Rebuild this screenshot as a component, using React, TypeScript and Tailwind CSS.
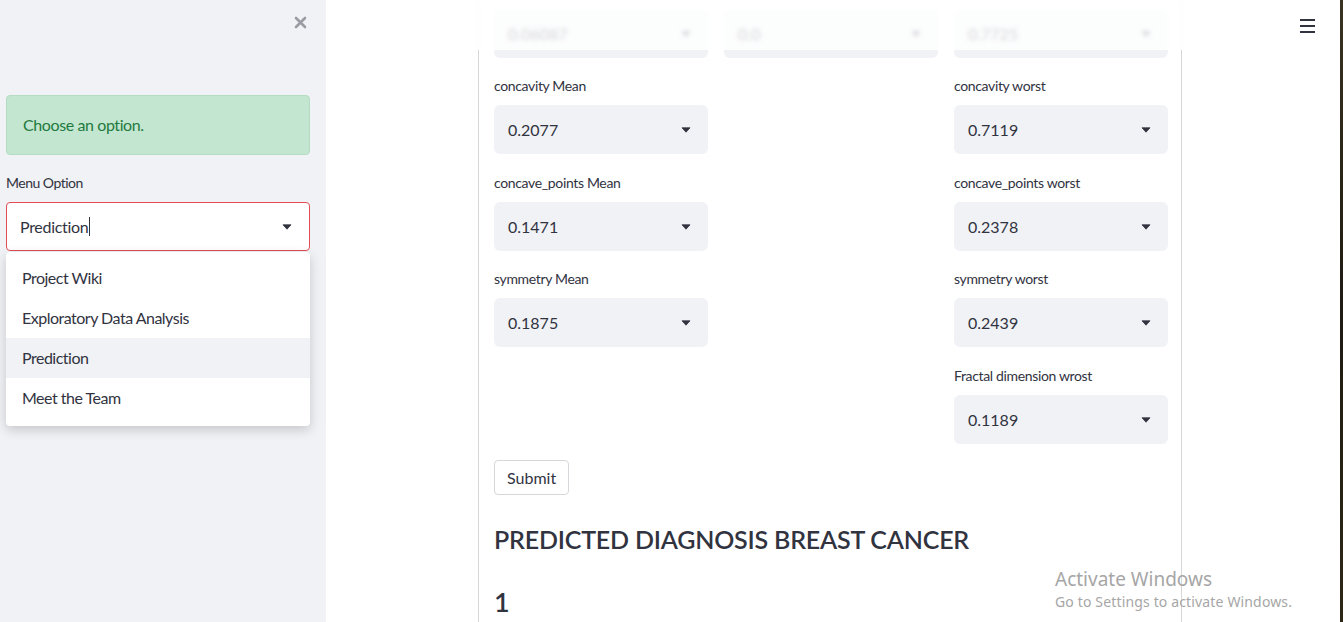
import React from "react";

const FONT = { fontFamily: "Lato, 'Noto Sans', sans-serif" };

function Caret() {
  return (
    <svg width="10" height="6" viewBox="0 0 10 6" className="shrink-0">
      <path d="M1 0.8 L9 0.8 L5 5.2 Z" fill="#31333f" stroke="#31333f" strokeWidth="0.8" strokeLinejoin="round" />
    </svg>
  );
}

function SelectBox({ value, tall = true }: { value: string; tall?: boolean }) {
  return (
    <div
      className={`${tall ? "h-[49px]" : "h-[48px]"} w-full rounded-[6px] bg-[#f0f2f6] flex items-center justify-between pl-[14px] pr-[17px] text-[16px] text-[#31333f]`}
    >
      <span>{value}</span>
      <Caret />
    </div>
  );
}

function Field({ label, value }: { label: string; value: string }) {
  return (
    <div className="flex flex-col">
      <div className="h-[31px] text-[14px] leading-[24px] tracking-[-0.35px] text-[#31333f]">{label}</div>
      <SelectBox value={value} />
    </div>
  );
}

export default function App() {
  return (
    <div className="flex h-[622px] w-[1343px] overflow-hidden bg-white" style={FONT}>
      {/* Sidebar */}
      <aside className="relative w-[326px] shrink-0 bg-[#f0f2f6] pl-[6px] pr-[16px] pt-[95px]">
        <button className="absolute right-[19px] top-[15px] flex h-[14px] w-[14px] items-center justify-center">
          <svg width="13" height="13" viewBox="0 0 13 13">
            <path d="M2 2 L11 11 M11 2 L2 11" stroke="#9b9ca3" strokeWidth="2.6" strokeLinecap="round" />
          </svg>
        </button>
        <div className="flex h-[60px] items-center rounded-[4px] border border-[#b4dcc2] bg-[#c3e6d0] px-[16px] text-[16px] tracking-[-0.4px] text-[#1f7a3e]">
          Choose an option.
        </div>
        <div className="mt-[16px] h-[31px] text-[14px] leading-[24px] tracking-[-0.5px] text-[#31333f]">Menu Option</div>
        <div className="relative">
          <div className="flex h-[49px] items-center justify-between rounded-[4px] border border-[#e34c56] bg-white pl-[13px] pr-[17px] text-[16px] text-[#31333f]">
            <span className="flex items-center tracking-[-0.3px]">
              Prediction
              <span className="ml-[1px] inline-block h-[19px] w-[1px] bg-[#31333f]" />
            </span>
            <Caret />
          </div>
          <div className="absolute left-0 right-0 top-[50px] z-20 rounded-[4px] bg-white pb-[8px] pt-[6px] shadow-[0_4px_12px_rgba(0,0,0,0.18)]">
            {["Project Wiki", "Exploratory Data Analysis", "Prediction", "Meet the Team"].map((t) => (
              <div
                key={t}
                className={`flex h-[40px] items-center px-[16px] text-[16px] tracking-[-0.5px] text-[#31333f] ${t === "Prediction" ? "bg-[#f0f2f6]" : ""}`}
              >
                {t}
              </div>
            ))}
          </div>
        </div>
      </aside>

      {/* Main */}
      <main className="relative flex-1 overflow-hidden bg-white">
        <header className="absolute left-0 right-0 top-0 z-10 h-[50px] bg-white/80 backdrop-blur-[2px]">
          <button className="absolute right-[25px] top-[19px] flex flex-col gap-[4px]">
            <span className="block h-[2px] w-[15px] bg-[#31333f]" />
            <span className="block h-[2px] w-[15px] bg-[#31333f]" />
            <span className="block h-[2px] w-[15px] bg-[#31333f]" />
          </button>
        </header>

        <div className="ml-[152px] h-full w-[704px] border-x border-[#d6d7db] pl-[15px] pr-[13px] pt-[10px]">
          <div className="grid grid-cols-3 gap-x-[16px]">
            <SelectBox value="0.06087" tall={false} />
            <SelectBox value="0.0" tall={false} />
            <SelectBox value="0.7725" tall={false} />
          </div>
          <div className="mt-[16px] grid grid-cols-3 gap-x-[16px]">
            <Field label="concavity Mean" value="0.2077" />
            <div />
            <Field label="concavity worst" value="0.7119" />
          </div>
          <div className="mt-[17px] grid grid-cols-3 gap-x-[16px]">
            <Field label="concave_points Mean" value="0.1471" />
            <div />
            <Field label="concave_points worst" value="0.2378" />
          </div>
          <div className="mt-[16px] grid grid-cols-3 gap-x-[16px]">
            <Field label="symmetry Mean" value="0.1875" />
            <div />
            <Field label="symmetry worst" value="0.2439" />
          </div>
          <div className="mt-[17px] grid grid-cols-3 gap-x-[16px]">
            <div />
            <div />
            <Field label="Fractal dimension wrost" value="0.1189" />
          </div>
          <button className="mt-[16px] h-[35px] rounded-[4px] border border-[#d6d7db] bg-white px-[12px] text-[16px] text-[#31333f]">
            Submit
          </button>
          <h3 className="mt-[27px] text-[25px] font-semibold leading-[34px] tracking-[-0.2px] text-[#31333f]">
            PREDICTED DIAGNOSIS BREAST CANCER
          </h3>
          <div className="mt-[29px] text-[27px] font-semibold leading-[34px] text-[#31333f]">1</div>
        </div>

        <div className="pointer-events-none absolute left-[729px] top-[566px] z-30 text-[#a6a6a6]" style={{ fontFamily: "'Noto Sans', sans-serif" }}>
          <div className="text-[19px] leading-[26px]">Activate Windows</div>
          <div className="text-[14px] leading-[20px] tracking-[0.15px]">Go to Settings to activate Windows.</div>
        </div>
      </main>
      <div className="w-[3px] shrink-0 bg-gradient-to-b from-[#3a3222] via-[#1f1a12] to-[#2e2718]" />
    </div>
  );
}
